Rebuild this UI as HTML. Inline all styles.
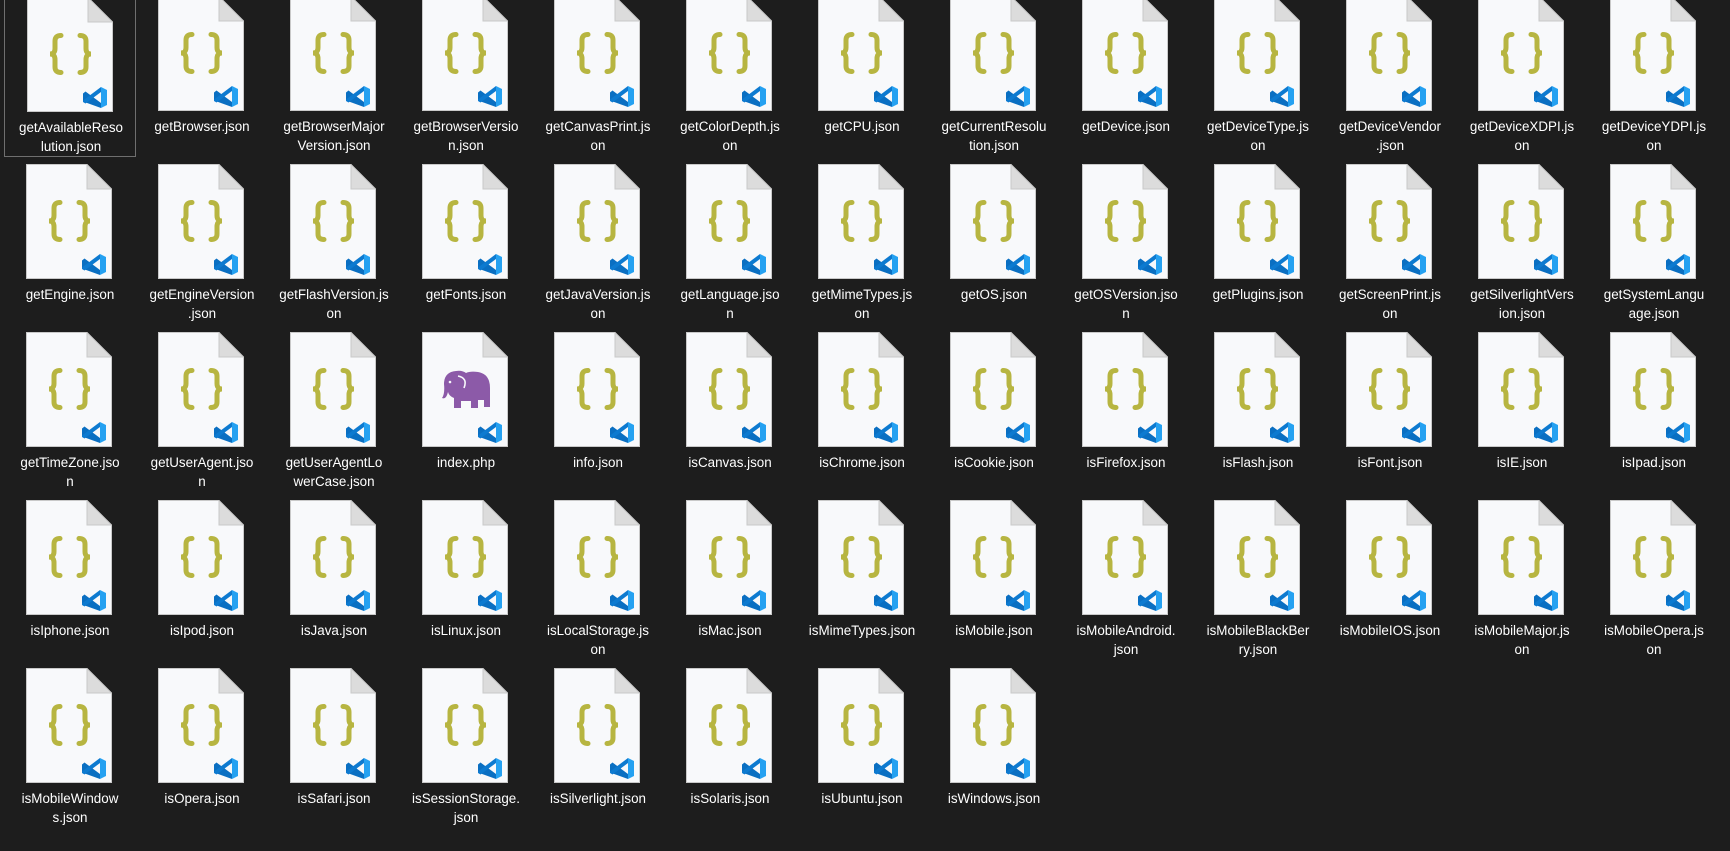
<!DOCTYPE html>
<html><head><meta charset="utf-8">
<style>
html,body{margin:0;padding:0;background:#1d1d1d;width:1730px;height:851px;overflow:hidden;font-family:"Liberation Sans",sans-serif}
.c{position:absolute;width:132px;height:168px}
.c svg{position:absolute;left:22px;top:0;width:86px;height:115px}
.c span{position:absolute;left:0;top:121px;width:132px;text-align:center;color:#fff;font-size:13.4px;line-height:19px}
.sel{border:1px solid #6f6f6f;box-sizing:border-box}
</style></head><body>
<svg width="0" height="0" style="position:absolute">
<defs>
<symbol id="pg" viewBox="0 0 86 115">
<path d="M0.5 0.5H61L85.5 25V114.5H0.5Z" fill="#f8f9fb" stroke="#c9c9c9"/>
<path d="M61 0.5V25H85.5Z" fill="#dcdcdc" stroke="#c9c9c9"/>
</symbol>
<symbol id="vs" viewBox="0 0 86 115">
<path d="M56 96.5L58.5 94.5L74 106V111L56 104.5Z" fill="#0a6fc2"/>
<path d="M56 104.5L58.5 106.5L74 95V90L56 96.5Z" fill="#0e7fd6" opacity="0"/>
<path d="M74 90L56 103.5V105L58.5 106.5L74 95Z" fill="#0d7ad0"/>
<path d="M74 90L80 93V108L74 111Z" fill="#25a1f1"/>
</symbol>
<symbol id="js" viewBox="0 0 86 115">
<use href="#pg"/>
<g fill="none" stroke="#b7b541" stroke-width="5" stroke-linecap="round">
<path d="M34 38.5Q28 38.5 28 44V51.5Q28 57 23 57Q28 57 28 62.5V70Q28 75.5 34 75.5"/>
<path d="M53 38.5Q59 38.5 59 44V51.5Q59 57 64 57Q59 57 59 62.5V70Q59 75.5 53 75.5"/>
</g>
<use href="#vs"/>
</symbol>
<symbol id="php" viewBox="0 0 86 115">
<use href="#pg"/>
<path d="M22 52Q22 40 34 39Q40 38 44 41Q48 39 56 40Q68 42 68 56V75H62V68H56V76H49V69H39V76H32V66Q27 64 26 60Q24 68 20 66Q23 62 22 52Z" fill="#8c5aa8"/>
<path d="M36 44Q46 46 42 56" fill="none" stroke="#f8f9fb" stroke-width="1.6"/>
<circle cx="28" cy="50" r="1.3" fill="#f8f9fb"/>
<use href="#vs"/>
</symbol>
</defs></svg>

<!-- Row 1 -->
<div class="c sel" style="left:4px;top:-27px;height:184px"><svg style="top:23px"><use href="#js"/></svg><span style="top:144px">getAvailableReso<br>lution.json</span></div>
<div class="c" style="left:136px;top:-4px"><svg><use href="#js"/></svg><span>getBrowser.json</span></div>
<div class="c" style="left:268px;top:-4px"><svg><use href="#js"/></svg><span>getBrowserMajor<br>Version.json</span></div>
<div class="c" style="left:400px;top:-4px"><svg><use href="#js"/></svg><span>getBrowserVersio<br>n.json</span></div>
<div class="c" style="left:532px;top:-4px"><svg><use href="#js"/></svg><span>getCanvasPrint.js<br>on</span></div>
<div class="c" style="left:664px;top:-4px"><svg><use href="#js"/></svg><span>getColorDepth.js<br>on</span></div>
<div class="c" style="left:796px;top:-4px"><svg><use href="#js"/></svg><span>getCPU.json</span></div>
<div class="c" style="left:928px;top:-4px"><svg><use href="#js"/></svg><span>getCurrentResolu<br>tion.json</span></div>
<div class="c" style="left:1060px;top:-4px"><svg><use href="#js"/></svg><span>getDevice.json</span></div>
<div class="c" style="left:1192px;top:-4px"><svg><use href="#js"/></svg><span>getDeviceType.js<br>on</span></div>
<div class="c" style="left:1324px;top:-4px"><svg><use href="#js"/></svg><span>getDeviceVendor<br>.json</span></div>
<div class="c" style="left:1456px;top:-4px"><svg><use href="#js"/></svg><span>getDeviceXDPI.js<br>on</span></div>
<div class="c" style="left:1588px;top:-4px"><svg><use href="#js"/></svg><span>getDeviceYDPI.js<br>on</span></div>

<!-- Row 2 -->
<div class="c" style="left:4px;top:164px"><svg><use href="#js"/></svg><span>getEngine.json</span></div>
<div class="c" style="left:136px;top:164px"><svg><use href="#js"/></svg><span>getEngineVersion<br>.json</span></div>
<div class="c" style="left:268px;top:164px"><svg><use href="#js"/></svg><span>getFlashVersion.js<br>on</span></div>
<div class="c" style="left:400px;top:164px"><svg><use href="#js"/></svg><span>getFonts.json</span></div>
<div class="c" style="left:532px;top:164px"><svg><use href="#js"/></svg><span>getJavaVersion.js<br>on</span></div>
<div class="c" style="left:664px;top:164px"><svg><use href="#js"/></svg><span>getLanguage.jso<br>n</span></div>
<div class="c" style="left:796px;top:164px"><svg><use href="#js"/></svg><span>getMimeTypes.js<br>on</span></div>
<div class="c" style="left:928px;top:164px"><svg><use href="#js"/></svg><span>getOS.json</span></div>
<div class="c" style="left:1060px;top:164px"><svg><use href="#js"/></svg><span>getOSVersion.jso<br>n</span></div>
<div class="c" style="left:1192px;top:164px"><svg><use href="#js"/></svg><span>getPlugins.json</span></div>
<div class="c" style="left:1324px;top:164px"><svg><use href="#js"/></svg><span>getScreenPrint.js<br>on</span></div>
<div class="c" style="left:1456px;top:164px"><svg><use href="#js"/></svg><span>getSilverlightVers<br>ion.json</span></div>
<div class="c" style="left:1588px;top:164px"><svg><use href="#js"/></svg><span>getSystemLangu<br>age.json</span></div>

<!-- Row 3 -->
<div class="c" style="left:4px;top:332px"><svg><use href="#js"/></svg><span>getTimeZone.jso<br>n</span></div>
<div class="c" style="left:136px;top:332px"><svg><use href="#js"/></svg><span>getUserAgent.jso<br>n</span></div>
<div class="c" style="left:268px;top:332px"><svg><use href="#js"/></svg><span>getUserAgentLo<br>werCase.json</span></div>
<div class="c" style="left:400px;top:332px"><svg><use href="#php"/></svg><span>index.php</span></div>
<div class="c" style="left:532px;top:332px"><svg><use href="#js"/></svg><span>info.json</span></div>
<div class="c" style="left:664px;top:332px"><svg><use href="#js"/></svg><span>isCanvas.json</span></div>
<div class="c" style="left:796px;top:332px"><svg><use href="#js"/></svg><span>isChrome.json</span></div>
<div class="c" style="left:928px;top:332px"><svg><use href="#js"/></svg><span>isCookie.json</span></div>
<div class="c" style="left:1060px;top:332px"><svg><use href="#js"/></svg><span>isFirefox.json</span></div>
<div class="c" style="left:1192px;top:332px"><svg><use href="#js"/></svg><span>isFlash.json</span></div>
<div class="c" style="left:1324px;top:332px"><svg><use href="#js"/></svg><span>isFont.json</span></div>
<div class="c" style="left:1456px;top:332px"><svg><use href="#js"/></svg><span>isIE.json</span></div>
<div class="c" style="left:1588px;top:332px"><svg><use href="#js"/></svg><span>isIpad.json</span></div>

<!-- Row 4 -->
<div class="c" style="left:4px;top:500px"><svg><use href="#js"/></svg><span>isIphone.json</span></div>
<div class="c" style="left:136px;top:500px"><svg><use href="#js"/></svg><span>isIpod.json</span></div>
<div class="c" style="left:268px;top:500px"><svg><use href="#js"/></svg><span>isJava.json</span></div>
<div class="c" style="left:400px;top:500px"><svg><use href="#js"/></svg><span>isLinux.json</span></div>
<div class="c" style="left:532px;top:500px"><svg><use href="#js"/></svg><span>isLocalStorage.js<br>on</span></div>
<div class="c" style="left:664px;top:500px"><svg><use href="#js"/></svg><span>isMac.json</span></div>
<div class="c" style="left:796px;top:500px"><svg><use href="#js"/></svg><span>isMimeTypes.json</span></div>
<div class="c" style="left:928px;top:500px"><svg><use href="#js"/></svg><span>isMobile.json</span></div>
<div class="c" style="left:1060px;top:500px"><svg><use href="#js"/></svg><span>isMobileAndroid.<br>json</span></div>
<div class="c" style="left:1192px;top:500px"><svg><use href="#js"/></svg><span>isMobileBlackBer<br>ry.json</span></div>
<div class="c" style="left:1324px;top:500px"><svg><use href="#js"/></svg><span>isMobileIOS.json</span></div>
<div class="c" style="left:1456px;top:500px"><svg><use href="#js"/></svg><span>isMobileMajor.js<br>on</span></div>
<div class="c" style="left:1588px;top:500px"><svg><use href="#js"/></svg><span>isMobileOpera.js<br>on</span></div>

<!-- Row 5 -->
<div class="c" style="left:4px;top:668px"><svg><use href="#js"/></svg><span>isMobileWindow<br>s.json</span></div>
<div class="c" style="left:136px;top:668px"><svg><use href="#js"/></svg><span>isOpera.json</span></div>
<div class="c" style="left:268px;top:668px"><svg><use href="#js"/></svg><span>isSafari.json</span></div>
<div class="c" style="left:400px;top:668px"><svg><use href="#js"/></svg><span>isSessionStorage.<br>json</span></div>
<div class="c" style="left:532px;top:668px"><svg><use href="#js"/></svg><span>isSilverlight.json</span></div>
<div class="c" style="left:664px;top:668px"><svg><use href="#js"/></svg><span>isSolaris.json</span></div>
<div class="c" style="left:796px;top:668px"><svg><use href="#js"/></svg><span>isUbuntu.json</span></div>
<div class="c" style="left:928px;top:668px"><svg><use href="#js"/></svg><span>isWindows.json</span></div>
</body></html>
